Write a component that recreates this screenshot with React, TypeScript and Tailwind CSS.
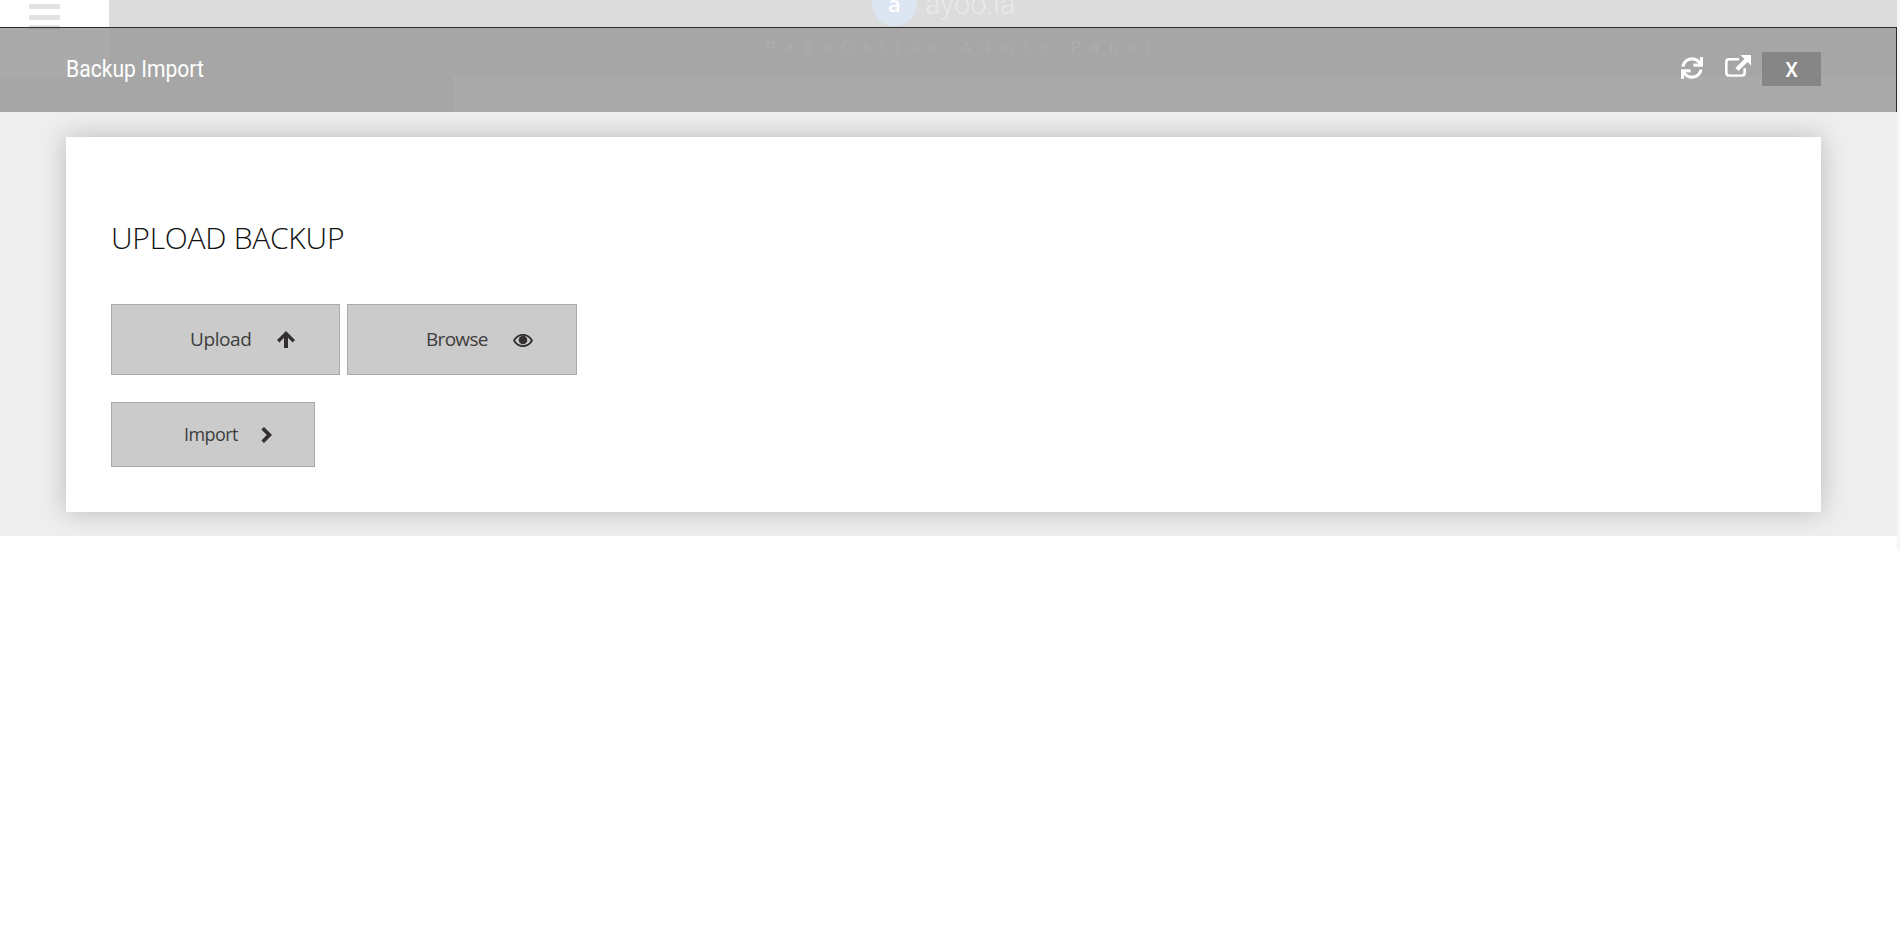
import React from "react";
import { FaSync } from "react-icons/fa";

// FA4-style external link, box outline with a heavy arrow
const ExternalLink = () => (
  <svg viewBox="0 0 26 22" className="w-[26px] h-[22px]" fill="white">
    <path d="M4 3h10v2.6H4.4a1.8 1.8 0 0 0-1.8 1.8v10.2a1.8 1.8 0 0 0 1.8 1.8h12.2a1.8 1.8 0 0 0 1.8-1.8v-4.4H21v4.6a4 4 0 0 1-4 4H4a4 4 0 0 1-4-4V7a4 4 0 0 1 4-4z" />
    <path d="M15.5 0H26v10.5l-3.4-3.4-9 9-3.2-3.2 9-9z" />
  </svg>
);

const ArrowUpIcon = () => (
  <svg viewBox="0 0 18 17" className="w-[18px] h-[17px] ml-[26px]" fill="#332f2f">
    <path d="M9 0l9 9-2.4 2.4L11 6.8V17H7V6.8L2.4 11.4 0 9z" />
  </svg>
);

const EyeIcon = () => (
  <svg viewBox="0 0 20 13" className="w-[20px] h-[13px] ml-[25px] mt-[1px]" fill="#332f2f">
    <path
      fillRule="evenodd"
      d="M10 0c4.4 0 7.9 2.6 10 6.5C17.900 10.400 14.400 13 10 13S2.100 10.400 0 6.500C2.100 2.600 5.600 0 10 0zM10 1.800c-3.400 0-6.100 1.800-7.900 4.700 1.800 2.900 4.500 4.700 7.900 4.700s6.100-1.800 7.900-4.700C16.100 3.600 13.400 1.800 10 1.800z"
    />
    <circle cx="10" cy="6" r="4.300" />
  </svg>
);

const ChevronIcon = () => (
  <svg viewBox="0 0 12 16" className="w-[12px] h-[16px] ml-[23px]" fill="#332f2f">
    <path d="M3 0l8 8-8 8-2.600-2.600L5.800 8 .4 2.600z" />
  </svg>
);

const ActionButton = ({
  label,
  icon,
  className,
}: {
  label: string;
  icon: React.ReactNode;
  className: string;
}) => (
  <button
    className={`flex items-center bg-[#cbcbcb] border border-[#a9a9a9] text-[#3d3d3d] ${className}`}
  >
    <span>{label}</span>
    {icon}
  </button>
);

const App: React.FC = () => {
  return (
    <div
      className="min-h-[937px] bg-white overflow-hidden flex items-start"
      style={{ fontFamily: '"Open Sans", sans-serif' }}
    >
      <div className="w-[1897px] shrink-0">
        {/* page behind the modal */}
        <div className="relative h-[28px] bg-[#dcdcdc] border-b border-[#2a2a2a] flex">
          <div className="w-[109px] h-[27px] bg-white flex flex-col gap-[5.500px] pt-[4px] pl-[29px] overflow-hidden">
            <div className="w-[31px] h-[5px] shrink-0 bg-[#e2e2e2] rounded-[1px]" />
            <div className="w-[31px] h-[5px] shrink-0 bg-[#e2e2e2] rounded-[1px]" />
            <div className="w-[31px] h-[5px] shrink-0 bg-[#e2e2e2] rounded-[1px]" />
          </div>
          <div className="absolute left-[872px] top-[-20px] w-[45px] h-[46px] rounded-full bg-[#dbe6f2] flex items-end justify-center pb-[11px] text-white text-[22px] leading-[24px] font-semibold">
            a
          </div>
          <div
            className="absolute left-[925px] top-[-16px] text-[#e9e9e9] text-[29px] leading-[40px]"
            style={{ fontFamily: "Roboto, sans-serif", fontWeight: 300 }}
          >
            ayoo.ia
          </div>
        </div>

        {/* modal header */}
        <div className="relative h-[84px] bg-[#a6a6a6] flex items-center pl-[66px] pr-[75px] border-r border-[#2a2a2a]">
          <div className="absolute left-0 top-0 w-[109px] h-[49px] bg-[#aaaaaa]" />
          <div className="absolute left-[29px] top-0 w-[31px] h-[2px] bg-[#a2a2a2]" />
          <div className="absolute left-[453px] right-0 bottom-0 h-[35px] bg-[#aaaaaa]" />
          <div
            className="absolute left-[766px] top-[9px] text-[#adadad] text-[15px] leading-[20px] tracking-[10.400px] whitespace-nowrap"
            style={{ fontFamily: "Roboto, sans-serif" }}
          >
            PageCation Admin Panel
          </div>
          <h1
            className="relative text-white text-[24px] leading-[30px] origin-left scale-x-[0.88] whitespace-nowrap mt-[-3px]"
            style={{ fontFamily: "Roboto, sans-serif" }}
          >
            Backup Import
          </h1>
          <div className="relative ml-auto flex items-center text-white mt-[-2px]">
            <FaSync className="w-[22px] h-[22px] mr-[22px] mt-[-2px]" />
            <div className="mr-[11px] mt-[-6px]">
              <ExternalLink />
            </div>
            <button
              className="w-[59px] h-[34px] bg-[#868686] text-white text-[20px] font-medium pt-[1px]"
              style={{ fontFamily: "Roboto, sans-serif" }}
            >
              X
            </button>
          </div>
        </div>

        {/* modal body */}
        <div className="h-[424px] bg-[#eeeeee] px-[66px] pt-[25px] w-full">
          <div className="h-[375px] w-[1755px] bg-white shadow-[0_0_24px_rgba(0,0,0,0.22)] pl-[45px] pt-[81px]">
            <h2
              className="text-[#111111] text-[30px] leading-[40px] whitespace-nowrap tracking-[-0.250px]"
              style={{ fontWeight: 300 }}
            >
              UPLOAD BACKUP
            </h2>
            <div className="flex gap-[7px] mt-[46px]">
              <ActionButton
                label="Upload"
                className="w-[229px] h-[71px] pl-[78px] text-[19px] tracking-[-0.400px]"
                icon={<ArrowUpIcon />}
              />
              <ActionButton
                label="Browse"
                className="w-[230px] h-[71px] pl-[78px] text-[19px] tracking-[-0.700px]"
                icon={<EyeIcon />}
              />
            </div>
            <div className="mt-[27px]">
              <ActionButton
                label="Import"
                className="w-[204px] h-[65px] pl-[72px] text-[18px] tracking-[-0.600px]"
                icon={<ChevronIcon />}
              />
            </div>
          </div>
        </div>
      </div>
      {/* scrollbar remnant on the right edge */}
      <div className="w-[3px] h-[550px] bg-[#f6f6f6]" />
    </div>
  );
};

export default App;
